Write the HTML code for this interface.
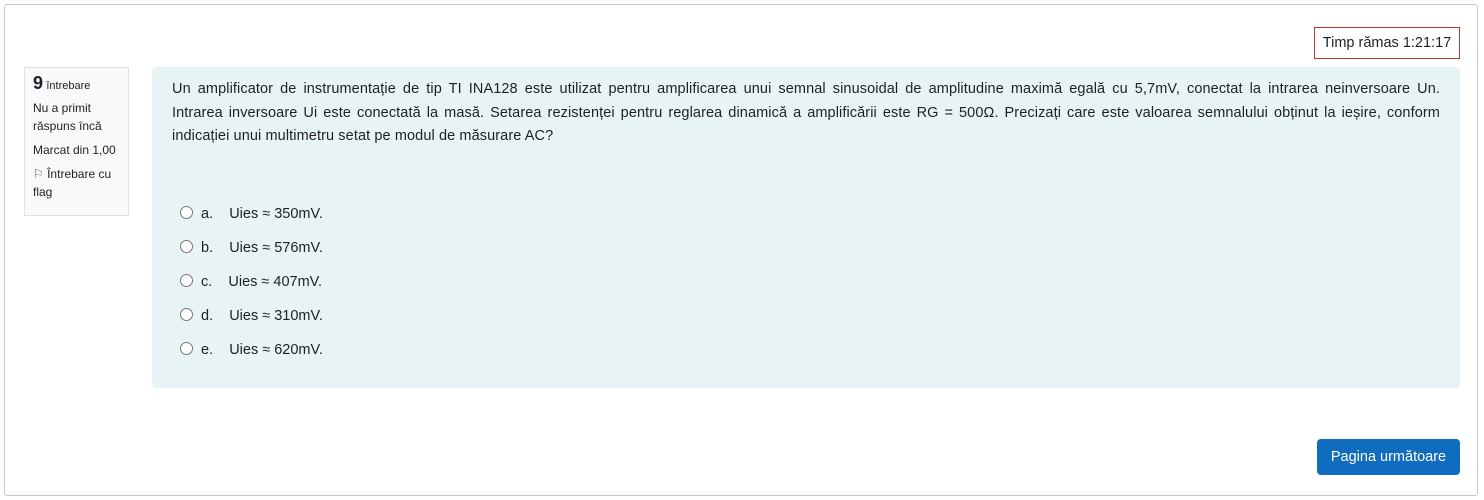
<!DOCTYPE html>
<html><head><meta charset="utf-8"><style>
body{margin:0;background:#fff;font-family:"Liberation Sans",sans-serif;color:#1d2125;}
.outer{position:absolute;left:4px;top:4px;width:1472px;height:490px;border:1px solid #c8c8c8;border-radius:3px;}
.timer{position:absolute;left:1314px;top:27px;width:146px;height:32px;border:1px solid #b03a2e;box-sizing:border-box;font-size:14.5px;line-height:31px;text-align:center;}
.info{position:absolute;left:24px;top:67px;width:105px;height:149px;border:1px solid #dee2e6;background:#f8f9fa;box-sizing:border-box;padding:6px 8px;font-size:12px;line-height:18px;}
.info .n{font-size:18px;font-weight:bold;}
.info .s{font-size:11px;}
.q{position:absolute;left:152px;top:67px;width:1308px;height:321px;background:#e7f3f5;border-radius:4px;}
.qt{position:absolute;left:20px;top:11px;width:1268px;font-size:14.5px;line-height:23.5px;letter-spacing:0.1px;white-space:nowrap;}
.qt div{text-align:justify;text-align-last:justify;white-space:normal;}
.qt div.l{text-align-last:left;}
.opt{position:absolute;left:28px;font-size:14.5px;}
.opt span.r{display:inline-block;width:11px;height:11px;border:1px solid #777;border-radius:50%;vertical-align:-1px;background:#fff;margin-right:8px;}
.btn{position:absolute;left:1317px;top:439px;width:143px;height:36px;background:#0f6cbf;color:#fff;border-radius:4px;font-size:14.5px;line-height:36px;text-align:center;}
</style></head><body>
<div class="outer"></div>
<div class="timer">Timp rămas 1:21:17</div>
<div class="info"><span class="n">9</span> <span class="s">întrebare</span><div style="margin-top:4px">Nu a primit răspuns încă</div><div style="margin-top:6px">Marcat din 1,00</div><div style="margin-top:6px"><span style="color:#666">⚐</span> Întrebare cu flag</div></div>
<div class="q">
<div class="qt"><div>Un amplificator de instrumentație de tip TI INA128 este utilizat pentru amplificarea unui semnal sinusoidal de amplitudine maximă egală cu 5,7mV, conectat la intrarea neinversoare Un.</div><div>Intrarea inversoare Ui este conectată la masă. Setarea rezistenței pentru reglarea dinamică a amplificării este RG = 500Ω. Precizați care este valoarea semnalului obținut la ieșire, conform</div><div class="l">indicației unui multimetru setat pe modul de măsurare AC?</div></div>
<div class="opt" style="top:139px"><span class="r"></span>a.&nbsp;&nbsp;&nbsp; Uies ≈ 350mV.</div>
<div class="opt" style="top:173px"><span class="r"></span>b.&nbsp;&nbsp;&nbsp; Uies ≈ 576mV.</div>
<div class="opt" style="top:207px"><span class="r"></span>c.&nbsp;&nbsp;&nbsp; Uies ≈ 407mV.</div>
<div class="opt" style="top:241px"><span class="r"></span>d.&nbsp;&nbsp;&nbsp; Uies ≈ 310mV.</div>
<div class="opt" style="top:275px"><span class="r"></span>e.&nbsp;&nbsp;&nbsp; Uies ≈ 620mV.</div>
</div>
<div class="btn">Pagina următoare</div>
</body></html>
